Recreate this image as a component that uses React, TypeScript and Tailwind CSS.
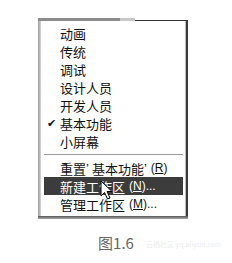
import React from "react";

const cjk = { fontFamily: '"Noto Sans CJK SC", "Noto Sans", sans-serif' };
const latin = { fontFamily: '"Liberation Sans", sans-serif' };

function Row({ children, check, active }: { children: React.ReactNode; check?: boolean; active?: boolean }) {
  return (
    <div
      className={
        "relative flex h-[18px] items-center whitespace-nowrap pl-[16px] text-[13px] leading-none " +
        (active ? "bg-[#3c3c3c] text-white" : "text-[#111]")
      }
    >
      {check && <span className="absolute left-[3px] top-[3px] text-[11px]">✔</span>}
      {children}
    </div>
  );
}

function Cursor() {
  return (
    <svg className="absolute left-[56px] top-[3px]" width="14" height="21" viewBox="0 0 14 21">
      <path d="M1 1 L1 16 L4.5 12.5 L7.5 19 L10 18 L7 11.5 L12 11.5 Z" fill="#fff" stroke="#000" strokeWidth="1" />
    </svg>
  );
}

export default function App() {
  return (
    <div className="h-[263px] w-[232px] bg-white" style={cjk}>
      <div className="pl-[38px] pt-[18px]">
        <div className="w-[150px]">
          <div className="flex h-[3px]">
            <div className="w-[82px] bg-[#8c8c8c]" />
            <div className="w-[15px] bg-[#c8c8c8]" />
            <div className="flex-1 border-b border-[#333]" />
          </div>
          <div className="flex">
            <div className="w-[3px] bg-gradient-to-r from-[#9a9a9a] to-[#d8d8d8]" />
            <div className="flex-1 bg-white pb-[3px] pl-[3px] pr-[2px] pt-[3px]">
              <Row>动画</Row>
              <Row>传统</Row>
              <Row>调试</Row>
              <Row>设计人员</Row>
              <Row>开发人员</Row>
              <Row check>基本功能</Row>
              <Row>小屏幕</Row>
              <div className="flex h-[9px] items-center">
                <div className="h-[2px] w-full border-t border-[#9a9a9a] border-b-white" />
              </div>
              <Row>
                重置<span style={latin} className="mr-[3px]">’</span>基本功能<span style={latin} className="mr-[4px]">’</span>
                <span style={latin} className="text-[12px]">
                  (<span className="underline">R</span>)
                </span>
              </Row>
              <div className="relative">
                <Row active>
                  新建工作区
                  <span style={latin} className="ml-[4px] text-[12px]">
                    (<span className="underline">N</span>)...
                  </span>
                </Row>
                <Row>
                  管理工作区
                  <span style={latin} className="ml-[4px] text-[12px]">
                    (<span className="underline">M</span>)...
                  </span>
                </Row>
                <Cursor />
              </div>
            </div>
            <div className="flex w-[3px]">
              <div className="w-[1px] bg-[#bdbdbd]" />
              <div className="w-[2px] bg-[#3a3a3a]" />
            </div>
          </div>
          <div className="h-[3px] bg-gradient-to-b from-[#555] to-[#aaa]" />
        </div>
      </div>
      <div className="relative mt-[15px] flex h-[18px] items-center justify-center">
        <span className="text-[15px] text-[#666]" style={{ fontFamily: '"Noto Sans CJK SC", "Liberation Sans", sans-serif' }}>
          图1.6
        </span>
        <span className="absolute left-[146px] top-[5px] text-[7px] text-[#ececec]">云栖社区 yq.aliyun.com</span>
      </div>
    </div>
  );
}
